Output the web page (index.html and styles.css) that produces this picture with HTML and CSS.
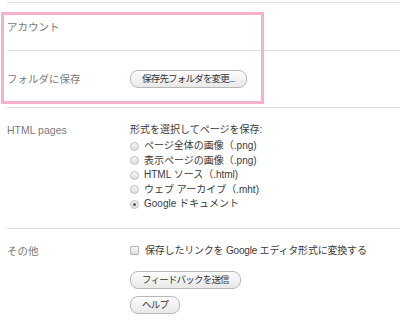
FILE: index.html
```html
<!DOCTYPE html>
<html lang="ja">
<head>
<meta charset="utf-8">
<link rel="stylesheet" href="styles.css">
</head>
<body>
<div class="page">
  <div class="row row-account">
    <div class="label">アカウント</div>
    <div class="content"></div>
  </div>
  <div class="row row-folder">
    <div class="label">フォルダに保存</div>
    <div class="content"><button class="btn btn-folder">保存先フォルダを変更...</button></div>
  </div>
  <div class="row row-html">
    <div class="label">HTML pages</div>
    <div class="content">
      <div class="line title">形式を選択してページを保存:</div>
      <div class="line"><span class="radio"></span>ページ全体の画像（.png)</div>
      <div class="line"><span class="radio"></span>表示ページの画像（.png)</div>
      <div class="line"><span class="radio"></span>HTML ソース（.html)</div>
      <div class="line"><span class="radio"></span>ウェブ アーカイブ（.mht)</div>
      <div class="line"><span class="radio checked"></span>Google ドキュメント</div>
    </div>
  </div>
  <div class="row row-other">
    <div class="label">その他</div>
    <div class="content">
      <div class="line"><span class="check"></span>保存したリンクを Google エディタ形式に変換する</div>
      <div class="btns">
        <button class="btn btn-feedback">フィードバックを送信</button>
        <button class="btn btn-help">ヘルプ</button>
      </div>
    </div>
  </div>
  <div class="highlight"></div>
</div>
</body>
</html>
```
FILE: styles.css
```css
html, body {
  margin: 0;
  padding: 0;
  background: #fff;
}
body {
  width: 400px;
  height: 326px;
  overflow: hidden;
  font-family: "Liberation Sans", "Noto Sans CJK JP", sans-serif;
  font-size: 10px;
  color: #3a3a3a;
}
.page {
  position: relative;
  margin-left: 7px;
  padding-top: 2px;
}
.page::before {
  content: "";
  display: block;
  height: 1px;
  background: #e3e3e3;
}
.row {
  display: flex;
  border-bottom: 1px solid #dedede;
}
.label {
  width: 123px;
  flex: none;
  color: #7a7a7a;
  font-size: 10.5px;
  line-height: 14px;
}
.content {
  flex: 1;
}
.row-account {
  padding: 17px 0 16px;
  align-items: flex-start;
}
.row-folder {
  padding: 19px 0 19px;
  align-items: center;
}
.row-html {
  padding: 15px 0 16px;
}
.line {
  display: flex;
  align-items: center;
  line-height: 14.5px;
  white-space: nowrap;
}
.row-other .line {
  letter-spacing: -0.2px;
}
.title {
  margin-bottom: 1.5px;
}
.radio {
  width: 7px;
  height: 7px;
  border: 1px solid #bdbdbd;
  border-radius: 50%;
  background: linear-gradient(#f6f6f6, #e0e0e0);
  margin-right: 5px;
  flex: none;
  position: relative;
}
.radio.checked::after {
  content: "";
  position: absolute;
  left: 2px;
  top: 2px;
  width: 3px;
  height: 3px;
  border-radius: 50%;
  background: #555;
}
.check {
  width: 7px;
  height: 7px;
  border: 1px solid #b5b5b5;
  border-radius: 1px;
  background: linear-gradient(#f6f6f6, #e0e0e0);
  margin-right: 6px;
  flex: none;
}
.row-other {
  border-bottom: 0;
  padding-top: 15px;
}
.btns {
  display: flex;
  flex-direction: column;
  align-items: flex-start;
  gap: 7px;
  margin-top: 13px;
}
.btn {
  font-family: inherit;
  font-size: 9.5px;
  letter-spacing: -0.8px;
  color: #333;
  height: 18px;
  padding: 0 11px;
  border: 1px solid #b8b8b8;
  border-radius: 8px;
  background: linear-gradient(#fdfdfd, #e8e8e8);
  line-height: 16px;
  margin: 0;
}
.highlight {
  position: absolute;
  left: -6px;
  top: 12px;
  width: 257px;
  height: 86px;
  border: 3px solid #f5b1cd;
  pointer-events: none;
}
```
